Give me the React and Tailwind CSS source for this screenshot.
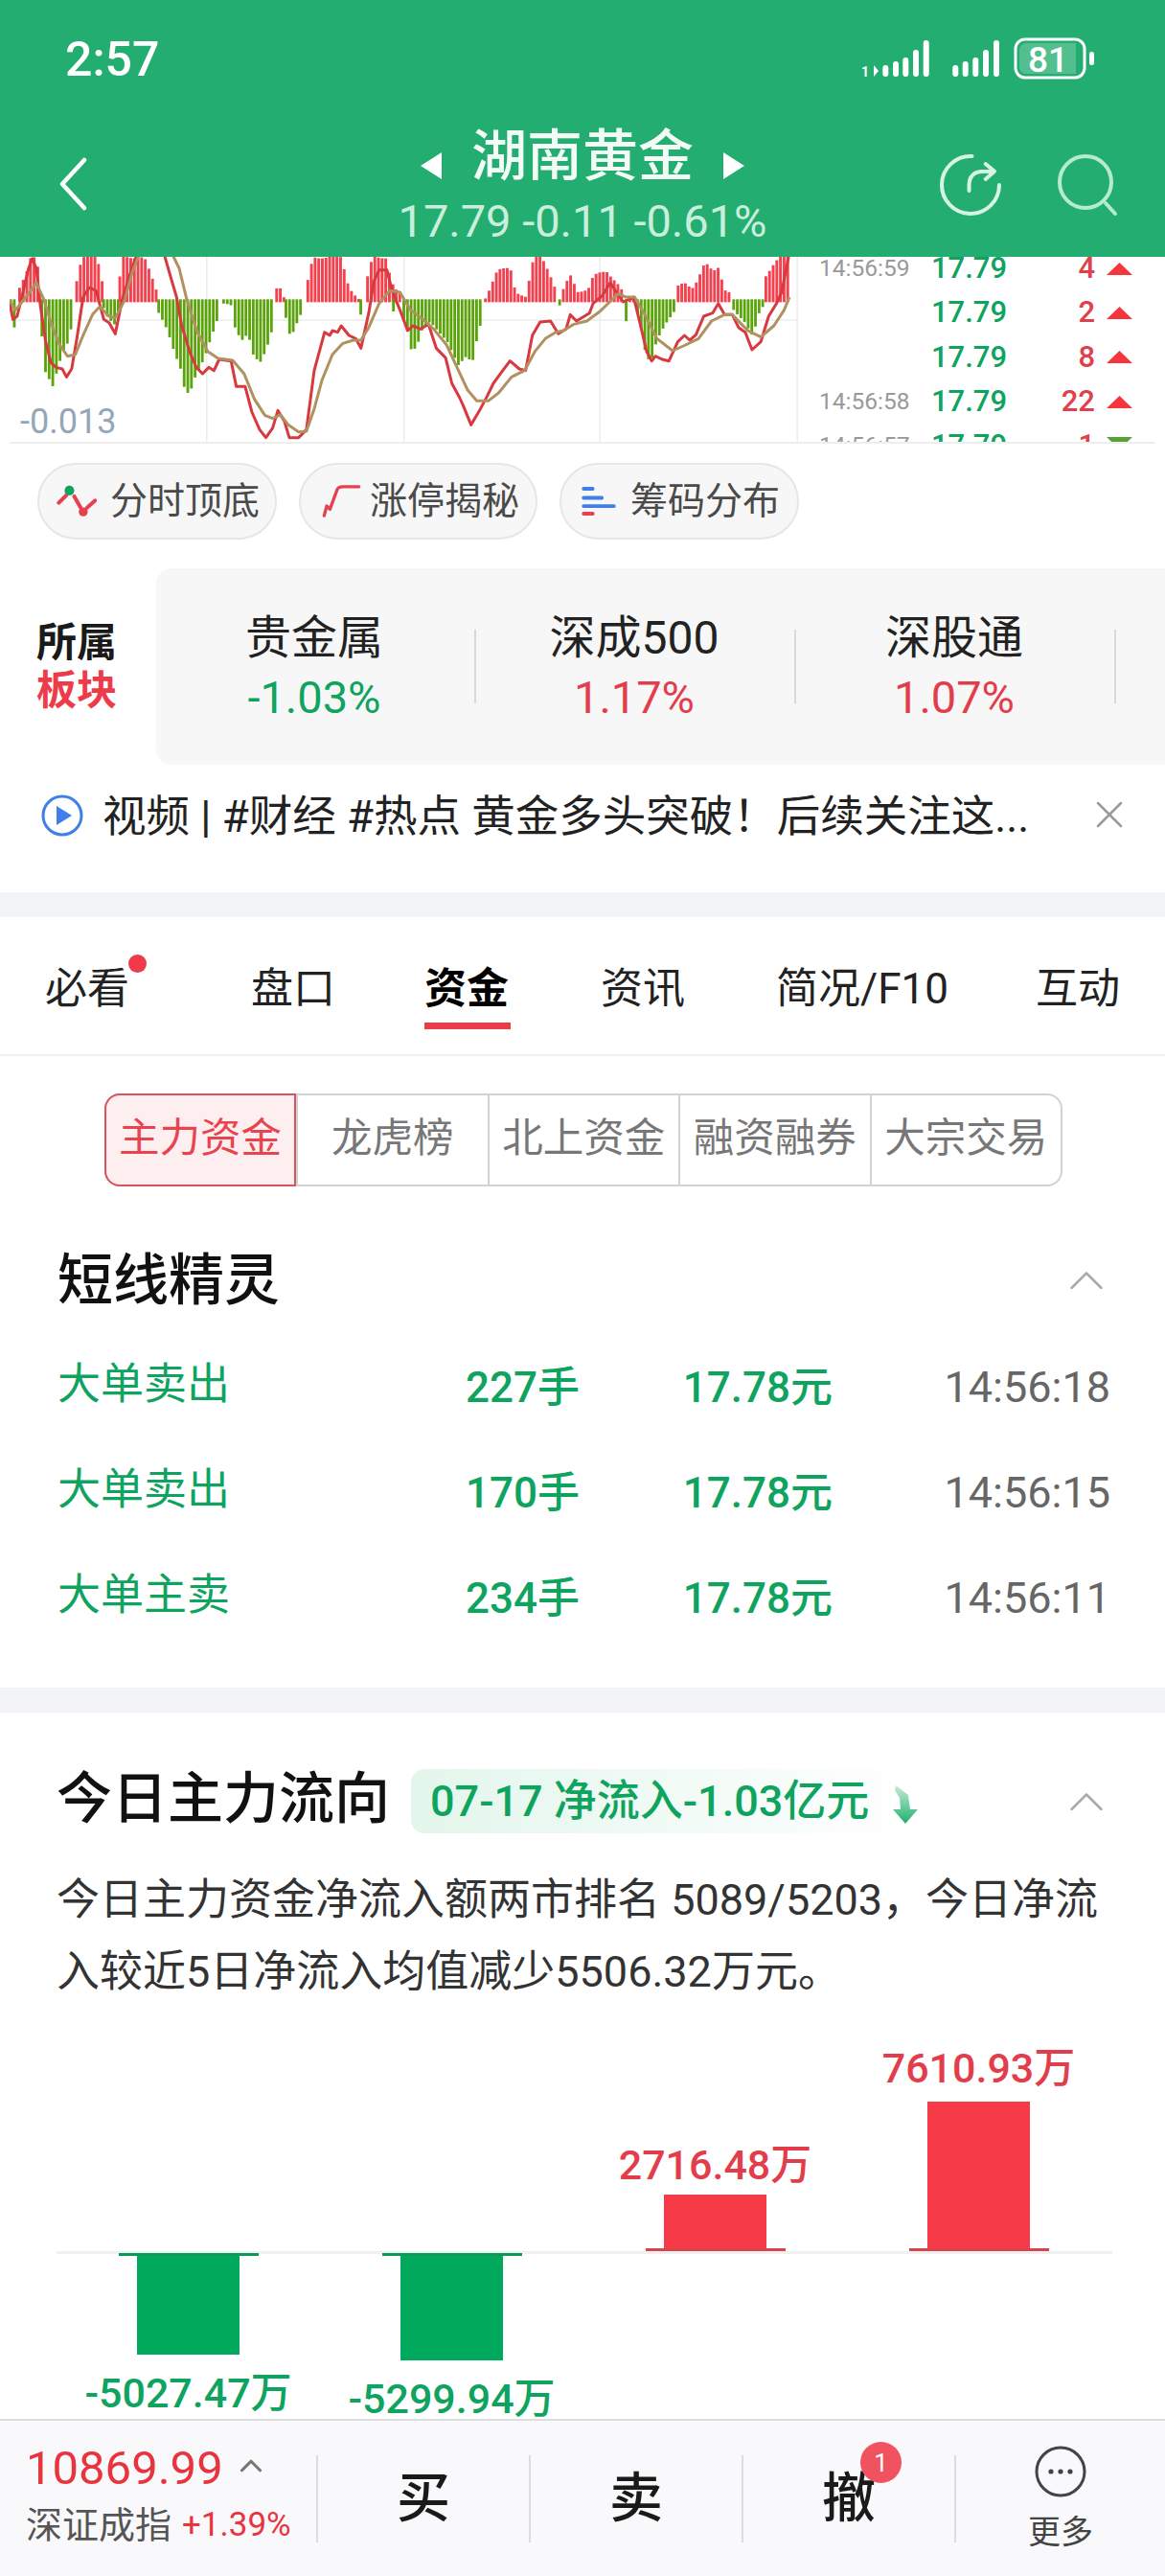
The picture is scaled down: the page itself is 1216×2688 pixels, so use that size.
import { ChevronUp } from 'lucide-react'

// chart coordinates: 1568 units across 850px, 3 units per px vertically
const histogram = [
  ['g', [[18, 190], [25, 250], [30, 190]]],
  ['r', [[35, 120], [40, 100], [50, 60], [55, 24], [65, 24], [72, 70]]],
  ['g', [[78, 270], [85, 385], [92, 410], [97, 445], [105, 400], [115, 340], [130, 280], [140, 195]]],
  ['r', [[145, 95], [155, 24], [180, 24], [190, 60], [195, 110]]],
  ['g', [[197, 180], [205, 210], [220, 240], [225, 200]]],
  ['r', [[228, 90], [235, 24], [275, 24], [285, 70], [298, 130]]],
  ['g', [[303, 200], [320, 260], [330, 310], [345, 370], [355, 450], [365, 440], [375, 395], [390, 350], [405, 270], [418, 205]]],
  ['g', [[428, 175], [442, 178]]],
  ['g', [[450, 250], [462, 290], [475, 260], [485, 325], [498, 355], [510, 320], [520, 265], [526, 210]]],
  ['r', [[530, 120], [537, 118], [545, 150]]],
  ['g', [[548, 210], [557, 275], [567, 240], [582, 190]]],
  ['r', [[590, 100], [600, 24], [640, 24], [655, 30], [665, 100], [675, 130], [690, 155]]],
  ['g', [[692, 200], [693, 200]]],
  ['r', [[705, 90], [715, 24], [740, 24], [750, 90], [754, 110]]],
  ['g', [[755, 190], [756, 190]]],
  ['r', [[760, 130], [770, 135]]],
  ['g', [[775, 230], [782, 260], [790, 320], [800, 300], [810, 250], [825, 230], [840, 260], [860, 290], [880, 360], [895, 340], [907, 360], [915, 290], [928, 195]]],
  ['r', [[932, 150], [940, 125], [955, 70], [980, 57], [990, 130], [1010, 150], [1025, 30], [1040, 24], [1055, 70], [1070, 135]]],
  ['g', [[1075, 180], [1078, 180]]],
  ['r', [[1082, 130], [1095, 80], [1110, 130], [1130, 125], [1140, 85], [1165, 70], [1185, 100], [1200, 140]]],
  ['g', [[1203, 225], [1205, 180]]],
  ['r', [[1210, 150], [1222, 150]]],
  ['g', [[1225, 200], [1230, 225], [1240, 320], [1250, 355], [1262, 290], [1280, 235], [1298, 185]]],
  ['r', [[1303, 115], [1315, 100], [1330, 120], [1340, 100], [1355, 45], [1370, 70], [1380, 55], [1395, 130], [1405, 135]]],
  ['g', [[1410, 190], [1430, 220], [1447, 275], [1460, 200], [1468, 180]]],
  ['r', [[1472, 80], [1485, 50], [1500, 24], [1520, 24]]],
]

const redLine = '18,165 25,220 33,210 45,130 55,60 62,30 70,60 78,180 88,290 98,355 108,370 120,375 128,400 138,375 148,280 160,150 172,120 185,130 200,220 210,230 222,265 235,160 250,80 265,10 315,10 330,95 340,150 350,240 365,320 378,370 390,390 402,370 412,380 422,345 445,350 455,430 472,430 485,510 500,565 512,590 525,560 535,505 548,540 557,590 575,590 590,565 605,380 615,320 625,260 635,270 640,255 650,260 657,240 672,270 685,280 695,310 710,200 720,100 730,65 745,65 755,130 770,190 785,255 795,240 810,250 825,235 840,310 858,340 870,420 885,465 892,490 907,550 925,500 938,460 950,420 968,380 982,350 1000,375 1012,380 1025,270 1040,228 1060,225 1075,265 1090,250 1098,205 1110,225 1135,200 1142,170 1160,145 1175,105 1185,130 1200,165 1220,150 1232,230 1245,320 1255,350 1262,335 1275,345 1288,350 1305,290 1318,270 1328,285 1340,268 1355,210 1372,200 1383,170 1395,205 1410,205 1422,245 1435,260 1448,315 1465,290 1480,210 1495,170 1505,135 1520,10'
const tanLine = '18,160 30,190 50,150 70,105 85,160 100,240 115,300 130,335 145,330 160,270 178,205 192,180 210,210 222,215 240,160 255,70 270,10 330,10 345,60 360,160 380,260 400,320 420,342 448,348 470,390 490,470 510,520 525,530 540,518 555,550 575,572 590,570 605,500 620,410 640,330 660,295 680,285 695,285 710,245 730,170 750,130 770,135 790,190 815,220 835,250 860,300 880,370 900,440 918,475 940,475 960,450 985,400 1010,380 1030,320 1050,280 1070,260 1085,255 1105,235 1130,225 1155,195 1190,140 1205,150 1222,150 1240,200 1265,280 1295,318 1320,300 1345,280 1370,225 1395,205 1410,205 1440,255 1465,275 1490,240 1510,190 1520,150'

function histogramBars() {
  const bars = []
  histogram.forEach(([color, pts]) => {
    const start = pts[0][0]
    const end = pts[pts.length - 1][0]
    for (let x = start; x <= end; x += 7) {
      let k = 0
      while (k < pts.length - 2 && pts[k + 1][0] < x) k++
      const [x0, y0] = pts[k]
      const [x1, y1] = pts[k + 1]
      const t = Math.min(1, (x - x0) / (x1 - x0))
      const y = y0 + (y1 - y0) * t + Math.sin(x * 1.7) * 5
      bars.push(
        color === 'r' ? (
          <rect key={x} x={x} y={y} width="5.4" height={Math.max(0, 166 - y)} fill="#f2414f" />
        ) : (
          <rect key={x} x={x} y="157" width="5.2" height={Math.max(0, y - 157)} fill="#5aa30a" />
        ),
      )
    }
  })
  return bars
}

const trades = [
  { time: '14:56:59', qty: '4' },
  { time: '', qty: '2' },
  { time: '', qty: '8' },
  { time: '14:56:58', qty: '22' },
  { time: '14:56:57', qty: '1', down: true },
]

const sectors = [
  { name: '贵金属', pct: '-1.03%', up: false },
  { name: '深成500', pct: '1.17%', up: true },
  { name: '深股通', pct: '1.07%', up: true },
]

const segments = ['主力资金', '龙虎榜', '北上资金', '融资融券', '大宗交易']

const signals = [
  { name: '大单卖出', qty: '227手', time: '14:56:18' },
  { name: '大单卖出', qty: '170手', time: '14:56:15' },
  { name: '大单主卖', qty: '234手', time: '14:56:11' },
]

function SignalBars({ xs }) {
  const tops = [68, 64, 60, 52, 42]
  return xs.map((x, i) => <rect key={x} x={x - 3} y={tops[i]} width="6" height={80 - tops[i]} rx="3" fill="#fff" />)
}

function StatusIcons() {
  return (
    <svg width="300" height="80" viewBox="880 20 300 80" className="mr-[36px] mt-[-14px] shrink-0">
      <text x="899" y="80" fontSize="14" fontWeight="700" fill="#fff" fontFamily="Roboto, sans-serif">1</text>
      <path d="M912 68l5 6-5 6z" fill="#fff" />
      <SignalBars xs={[924.3, 935, 945.3, 956, 966.7]} />
      <SignalBars xs={[997.3, 1007.7, 1018.3, 1029, 1040]} />
      <rect x="1060" y="41" width="72" height="40" rx="10" fill="none" stroke="#fff" strokeWidth="3" />
      <path d="M1071 45h52v32h-52a7 7 0 0 1-7-7v-18a7 7 0 0 1 7-7z" fill="#ffffff" opacity="0.22" />
      <rect x="1137" y="54" width="5" height="14" rx="2.5" fill="#fff" />
      <text x="1094" y="75" textAnchor="middle" fontSize="37" fontWeight="500" fill="#fff" fontFamily="Roboto, sans-serif">81</text>
    </svg>
  )
}

function Header() {
  return (
    <header className="h-[268px] shrink-0 bg-[#23ad70] text-white">
      <div className="flex h-[130px] items-start justify-between pl-[68px] pt-[34px]">
        <span className="text-[50px] font-medium leading-[56px]">2:57</span>
        <StatusIcons />
      </div>
      <div className="grid grid-cols-[1fr_auto_1fr] items-center">
        <svg width="36" height="58" viewBox="0 0 36 58" className="-mt-[4px] ml-[57px]" fill="none">
          <path d="M31 5 8 30l23 25" stroke="#fff" strokeWidth="4.5" strokeLinecap="round" strokeLinejoin="round" />
        </svg>
        <div className="flex flex-col items-center">
          <div className="flex items-center gap-[31px]">
            <svg width="22" height="28" viewBox="0 0 22 28" className="mt-[20px]"><path d="M22 0v28L0 14z" fill="#fff" /></svg>
            <span className="text-[58px] font-medium leading-[66px] text-[#f2fbf6]">湖南黄金</span>
            <svg width="22" height="28" viewBox="0 0 22 28" className="mt-[20px]"><path d="M0 0v28l22-14z" fill="#fff" /></svg>
          </div>
          <div className="mt-[10px] text-[47px] leading-[50px] text-[#c9efdc]">17.79 -0.11 -0.61%</div>
        </div>
        <div className="flex items-center justify-end gap-[55px] pr-[49px]">
          <svg width="70" height="70" viewBox="0 0 70 70" fill="none" stroke="#d6f3e4" strokeWidth="4" strokeLinecap="round" strokeLinejoin="round">
            <path d="M36.5 5A30 30 0 1 0 65 35" />
            <path d="M33.5 41V35Q34 22 46 21H57" />
            <path d="M50.7 13 60 20.7 50.7 29" />
          </svg>
          <svg width="64" height="66" viewBox="0 0 64 66" fill="none" stroke="#b5ebd0" strokeWidth="4" strokeLinecap="round">
            <circle cx="30" cy="30" r="27" />
            <path d="M51 52 61 63" />
          </svg>
        </div>
      </div>
    </header>
  )
}

function Triangle({ down }) {
  return (
    <svg width="27" height="13" viewBox="0 0 27 13" className={down ? 'ml-[12px] -mt-[5px]' : 'ml-[12px]'}>
      <path d={down ? 'M0 0h27L13.5 13z' : 'M13.5 0 27 13H0z'} fill={down ? '#5a9f3a' : '#f5363f'} />
    </svg>
  )
}

function MinuteChart() {
  return (
    <div className="ml-[10px] flex h-[195px] w-[1195px] shrink-0 overflow-hidden border-b-2 border-[#eeeeee]">
      <div className="relative h-[193px] w-[840px] shrink-0">
        <svg width="840" height="193" viewBox="18.45 24 1549.55 579" preserveAspectRatio="none" className="block">
          <g stroke="#ececec" strokeWidth="1.5" vectorEffect="non-scaling-stroke">
            <path d="M18 222H1535" vectorEffect="non-scaling-stroke" />
            <path d="M398 0V610M778 0V610M1155 0V610M1535 0V610" vectorEffect="non-scaling-stroke" />
          </g>
          {histogramBars()}
          <polyline points={redLine} fill="none" stroke="#d8393f" strokeWidth="3" strokeLinejoin="round" vectorEffect="non-scaling-stroke" />
          <polyline points={tanLine} fill="none" stroke="#b0915f" strokeWidth="3" strokeLinejoin="round" vectorEffect="non-scaling-stroke" />
        </svg>
        <span className="absolute left-[11px] top-[150px] text-[36px] leading-[44px] text-[#94a6b8]">-0.013</span>
      </div>
      <div className="-mt-[11px] w-[355px] pl-[7px]">
        {trades.map((t, i) => (
          <div key={i} className="flex h-[46.3px] items-center">
            <span className="w-[115px] -ml-[2px] mr-[2px] text-[24.5px] text-[#999999]">{t.time}</span>
            <div className="flex w-[171px] items-center justify-between text-[31px] font-medium">
              <span className="text-[#0ea35f]">17.79</span>
              <span className="text-[#e0404c]">{t.qty}</span>
            </div>
            <Triangle down={t.down} />
          </div>
        ))}
      </div>
    </div>
  )
}

function Chips() {
  return (
    <div className="mt-[20px] flex gap-[23px] pl-[39px]">
      <div className="flex h-[80px] w-[250px] items-center rounded-full border-2 border-[#e6e6e6] bg-[#f7f7f7] pl-[18px] text-[39px] text-[#4a4a4a]">
        <svg width="42" height="38" viewBox="90 75 125 110" fill="none" strokeWidth="12" strokeLinecap="round">
          <path d="M97 135 120 112M145 115l20 35M185 150l25-22" stroke="#e5424f" />
          <circle cx="130" cy="97" r="15" fill="#0ea35f" />
          <circle cx="173" cy="163" r="14" fill="#e5424f" />
        </svg>
        <span className="ml-[14px]">分时顶底</span>
      </div>
      <div className="flex h-[80px] w-[249px] items-center rounded-full border-2 border-[#e6e6e6] bg-[#f7f7f7] pl-[22px] text-[39px] text-[#4a4a4a]">
        <svg width="42" height="38" viewBox="105 75 125 110" fill="none">
          <path d="M112 175 120 145 130 155 152 95Q155 85 170 85H220" stroke="#e5424f" strokeWidth="10" strokeLinecap="round" strokeLinejoin="round" />
        </svg>
        <span className="ml-[8px]">涨停揭秘</span>
      </div>
      <div className="flex h-[80px] w-[250px] items-center rounded-full border-2 border-[#e6e6e6] bg-[#f7f7f7] pl-[20px] text-[39px] text-[#4a4a4a]">
        <svg width="38" height="34" viewBox="80 78 120 102" fill="none" strokeWidth="12" strokeLinecap="round">
          <path d="M90 88H120M90 118H150M90 145H190" stroke="#3f7fe8" />
          <path d="M90 170H120" stroke="#e5424f" />
        </svg>
        <span className="ml-[14px]">筹码分布</span>
      </div>
    </div>
  )
}

function Sectors() {
  return (
    <div className="mt-[30px] flex h-[205px] items-center">
      <div className="w-[163px] shrink-0 pl-[38px] text-[42px] font-bold leading-[50px]">
        <div className="text-[#1a1a1a]">所属</div>
        <div className="text-[#ee3b4a]">板块</div>
      </div>
      <div className="flex h-full flex-1 items-center rounded-l-[16px] bg-[#f7f7f7]">
        {sectors.map((s) => (
          <div key={s.name} className="flex h-[77px] w-[334px] flex-col items-center justify-center border-r-2 border-[#d9d9d9] pr-[2px]">
            <div className="text-[48px] leading-[56px] text-[#222222]">{s.name}</div>
            <div className={`mt-[8px] text-[47px] leading-[52px] ${s.up ? 'text-[#e33d4b]' : 'text-[#0ea35f]'}`}>{s.pct}</div>
          </div>
        ))}
      </div>
    </div>
  )
}

function NewsRow() {
  return (
    <div className="flex h-[133px] items-start pl-[43px] pt-[29px]">
      <svg width="44" height="44" viewBox="0 0 44 44" className="mt-[2px] shrink-0">
        <circle cx="22" cy="22" r="20" fill="none" stroke="#3f7fe8" strokeWidth="3" />
        <path d="M16 12 32 22 16 32z" fill="#3f7fe8" />
      </svg>
      <span className="ml-[20px] whitespace-nowrap text-[45.5px] leading-[52px] text-[#222222]">视频 | #财经 #热点 黄金多头突破！后续关注这...</span>
      <svg width="28" height="28" viewBox="0 0 28 28" className="ml-auto mr-[44px] mt-[9px] shrink-0" stroke="#9a9a9a" strokeWidth="2.5" strokeLinecap="round">
        <path d="M2 2 26 26M26 2 2 26" />
      </svg>
    </div>
  )
}

function Tabs() {
  return (
    <div className="flex h-[145px] items-start border-b-2 border-[#f0f0f4] pl-[47px] pt-[50px] text-[44px] leading-[50px] text-[#222222]">
      <span className="relative">
        必看
        <span className="absolute -top-[11px] -right-[18px] h-[19px] w-[19px] rounded-full bg-[#ee3b4a]" />
      </span>
      <span className="ml-[127px]">盘口</span>
      <span className="relative ml-[93px] font-bold text-black">
        资金
        <span className="absolute -bottom-[17px] left-0 h-[7px] w-[90px] bg-[#ee3b4a]" />
      </span>
      <span className="ml-[96px]">资讯</span>
      <span className="ml-[95px]">简况/F10</span>
      <span className="ml-[91px]">互动</span>
    </div>
  )
}

function SegmentTabs() {
  return (
    <div className="ml-[109px] mt-[39px] flex h-[97px] w-[1000px] rounded-[16px] border-2 border-[#d2d2d2]">
      {segments.map((label, i) => (
        <div
          key={label}
          className={
            i === 0
              ? '-m-[2px] mr-0 flex w-[200px] items-center justify-center whitespace-nowrap rounded-l-[16px] border-2 border-[#d9535c] bg-[#fdeff0] pb-[3px] text-[42.5px] text-[#e8434f]'
              : 'flex flex-1 items-center justify-center whitespace-nowrap border-l-2 border-[#d2d2d2] pb-[3px] text-[42.5px] text-[#777777] first:border-l-0'
          }
        >
          {label}
        </div>
      ))}
    </div>
  )
}

function Collapse() {
  return (
    <svg width="34" height="18" viewBox="0 0 34 18" fill="none" className="shrink-0">
      <path d="M1.5 17 17 1.5 32.5 17" stroke="#aaaaaa" strokeWidth="2.5" strokeLinecap="round" strokeLinejoin="round" />
    </svg>
  )
}

function ShortSignals() {
  return (
    <section className="px-[60px]">
      <div className="mt-[68px] flex h-[60px] items-center justify-between pr-[5px]">
        <h2 className="text-[58px] font-medium leading-[60px] text-[#111111]">短线精灵</h2>
        <Collapse />
      </div>
      <div className="mt-[27px]">
        {signals.map((s, i) => (
          <div key={i} className="flex h-[110px] items-center text-[44px]">
            <span className="w-[400px] -mt-[6px] text-[45px] text-[#0ea35f]">{s.name}</span>
            <span className="w-[145px] text-right font-medium text-[#0ea35f]">{s.qty}</span>
            <span className="w-[264px] text-right font-medium text-[#0ea35f]">17.78元</span>
            <span className="-mr-[3px] flex-1 text-right text-[45px] text-[#666666]">{s.time}</span>
          </div>
        ))}
      </div>
    </section>
  )
}

function Band() {
  return <div className="h-[26px] shrink-0 bg-[#f3f4f8]" />
}

function UpBar({ label, height, gap }) {
  return (
    <div className="flex flex-col items-center">
      <div className="whitespace-nowrap text-[43px] font-medium leading-[48px] text-[#e33d4b]" style={{ marginBottom: gap }}>{label}</div>
      <div className="w-[107px] bg-[#f63a47]" style={{ height }} />
      <div className="h-[3px] w-[146px] bg-[#d9434f]" />
    </div>
  )
}

function DownBar({ label, height, gap }) {
  return (
    <div className="flex flex-col items-center">
      <div className="h-[3px] w-[146px] bg-[#0a9a55]" />
      <div className="w-[107px] bg-[#00a95c]" style={{ height }} />
      <div className="whitespace-nowrap text-[43px] font-medium leading-[48px] text-[#0ea35f]" style={{ marginTop: gap }}>{label}</div>
    </div>
  )
}

function MoneyFlow() {
  return (
    <section>
      <div className="flex items-center pl-[59px] pr-[60px] pt-[59px]">
        <h2 className="pb-[5px] text-[58px] font-medium leading-[60px] text-[#111111]">今日主力流向</h2>
        <div className="ml-[22px] flex h-[67px] w-[531px] items-center rounded-l-[14px] bg-gradient-to-r from-[#e3f6ec] to-white pl-[20px]">
          <span className="whitespace-nowrap text-[45px] font-medium text-[#0ea35f]">07-17 净流入-1.03亿元</span>
          <svg width="28" height="40" viewBox="0 0 28 40" className="ml-[24px] mt-[6px] shrink-0">
            <defs>
              <linearGradient id="flowArrow" x1="0" y1="0" x2="0" y2="1">
                <stop offset="0" stopColor="#c8ecd9" />
                <stop offset="1" stopColor="#1fb06c" />
              </linearGradient>
            </defs>
            <path d="M4 0 17 10 19 25H27L14 40 1 25H9L8 13 3 5z" fill="url(#flowArrow)" />
          </svg>
        </div>
        <div className="ml-auto pr-[5px]"><Collapse /></div>
      </div>
      <p className="mt-[32px] pl-[59px] text-[45px] leading-[75px] text-[#333333] whitespace-nowrap">
        今日主力资金净流入额两市排名 5089/5203，今日净流
        <br />
        入较近5日净流入均值减少5506.32万元。
      </p>
      <div className="ml-[59px] w-[1102px]">
        <div className="grid h-[254px] w-[1100px] grid-cols-4 items-end">
          <div />
          <div />
          <UpBar label="2716.48万" height={56} gap={7} />
          <UpBar label="7610.93万" height={153} gap={11} />
        </div>
        <div className="h-[3px] bg-[#f0f0f0]" />
        <div className="-mt-px grid w-[1100px] grid-cols-4 items-start">
          <DownBar label="-5027.47万" height={103} gap={16} />
          <DownBar label="-5299.94万" height={109} gap={16} />
        </div>
      </div>
    </section>
  )
}

function BottomBar() {
  return (
    <footer className="flex h-[164px] shrink-0 items-center border-t-2 border-[#dddddd] bg-[#f9f9fb]">
      <div className="h-[91px] w-[332px] shrink-0 border-r-2 border-[#dddddd] pl-[27px]">
        <div className="-mt-[14px] flex h-[56px] items-center">
          <span className="text-[49px] leading-[56px] text-[#e8343f]">10869.99</span>
          <ChevronUp className="ml-[10px] -mt-[6px] text-[#777777]" size={38} strokeWidth={2} />
        </div>
        <div className="mt-[10px] flex h-[44px] items-center">
          <span className="text-[38px] text-[#555555]">深证成指</span>
          <span className="ml-[11px] text-[35px] text-[#e8343f]">+1.39%</span>
        </div>
      </div>
      {['买', '卖'].map((label) => (
        <div key={label} className="flex h-[91px] w-[222px] items-center justify-center border-r-2 border-[#dddddd] text-[56px] font-medium text-[#1a1a1a]">
          {label}
        </div>
      ))}
      <div className="flex h-[91px] w-[222px] items-center justify-center border-r-2 border-[#dddddd] text-[56px] font-medium text-[#1a1a1a]">
        <span className="relative">
          撤
          <span className="absolute -right-[27px] -top-[17px] flex h-[43px] w-[43px] items-center justify-center rounded-full bg-[#f0525f] text-[26px] font-normal leading-none text-white">1</span>
        </span>
      </div>
      <div className="flex flex-1 flex-col items-center">
        <svg width="56" height="54" viewBox="0 0 56 54" fill="none">
          <circle cx="28" cy="27" r="25" stroke="#444444" strokeWidth="3" />
          <circle cx="18" cy="27" r="2.6" fill="#444444" />
          <circle cx="28" cy="27" r="2.6" fill="#444444" />
          <circle cx="38" cy="27" r="2.6" fill="#444444" />
        </svg>
        <span className="mt-[16px] text-[34px] leading-[40px] text-[#444444]">更多</span>
      </div>
    </footer>
  )
}

export default function App() {
  return (
    <div className="flex h-[2688px] w-[1216px] flex-col overflow-hidden bg-white font-['Roboto','Noto_Sans_CJK_SC',sans-serif]">
      <Header />
      <main className="min-h-0 flex-1 overflow-hidden">
        <MinuteChart />
        <Chips />
        <Sectors />
        <NewsRow />
        <Band />
        <Tabs />
        <SegmentTabs />
        <ShortSignals />
        <div className="mt-[38px]"><Band /></div>
        <MoneyFlow />
      </main>
      <BottomBar />
    </div>
  )
}
